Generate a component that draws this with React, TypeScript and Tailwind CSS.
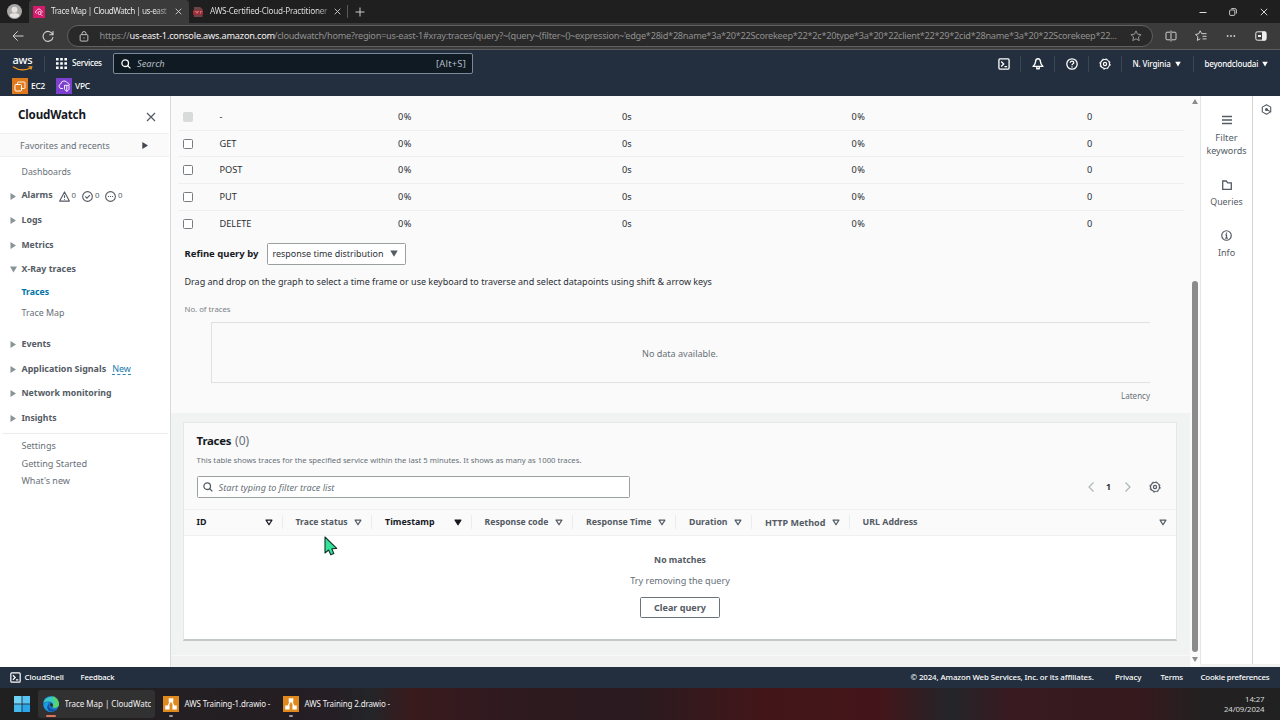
import type { ReactNode } from "react";

type IconProps = { className?: string };

function Gear({ className = "" }: IconProps) {
  return (
    <svg viewBox="0 0 12 12" className={className} fill="none" stroke="currentColor">
      <circle cx="6" cy="6" r="4.5" strokeWidth="1.2" />
      <circle cx="6" cy="6" r="5.2" strokeWidth="0.9" strokeDasharray="2 2.08" />
      <circle cx="6" cy="6" r="1.6" strokeWidth="1.2" />
    </svg>
  );
}

function Shell({ className = "" }: IconProps) {
  return (
    <svg viewBox="0 0 12 12" className={className} fill="none" stroke="currentColor" strokeWidth="1.3">
      <rect x="0.9" y="0.9" width="10.2" height="10.2" rx="1" />
      <path d="M3.2 3.5 5.7 6 3.2 8.5M6.5 8.6h2.6" />
    </svg>
  );
}

function Search({ className = "" }: IconProps) {
  return (
    <svg viewBox="0 0 10 10" className={className} fill="none" stroke="currentColor" strokeWidth="1.3">
      <circle cx="4.2" cy="4.2" r="3.3" />
      <path d="M6.6 6.6 9.4 9.4" />
    </svg>
  );
}

function Close({ className = "" }: IconProps) {
  return (
    <svg viewBox="0 0 10 10" className={className} fill="none" stroke="currentColor" strokeWidth="1.2">
      <path d="M1 1 9 9M9 1 1 9" />
    </svg>
  );
}

function Star({ className = "" }: IconProps) {
  return (
    <svg viewBox="0 0 12 12" className={className} fill="none" stroke="currentColor" strokeWidth="0.9" strokeLinejoin="round">
      <path d="M6 .9 7.5 4.2l3.6.4-2.7 2.4.8 3.6L6 8.8l-3.2 1.8.8-3.6L.9 4.6l3.6-.4z" />
    </svg>
  );
}

function Caret({ className = "" }: IconProps) {
  return (
    <svg viewBox="0 0 8 7" className={className} fill="currentColor">
      <path d="M0.3 0.5h7.4L4 6.8z" />
    </svg>
  );
}

function SortIcon({ filled = false }: { filled?: boolean }) {
  return (
    <svg viewBox="0 0 8 7" className="h-[7px] w-2 shrink-0" fill={filled ? "currentColor" : "none"} stroke="currentColor" strokeWidth="1.2" strokeLinejoin="round">
      <path d="M1.1 1.1h5.8L4 5.8z" />
    </svg>
  );
}

function Drawio() {
  return (
    <svg viewBox="0 0 16 16" className="h-4 w-4 shrink-0">
      <rect width="16" height="16" fill="#e08a1e" />
      <path d="M8 4 4.2 12M8 4l3.8 8" stroke="#fff" strokeWidth="1.3" />
      <path d="M5.7 2.2h4.6v4H5.7zM2.2 9.6h4.4v4H2.2zM9.4 9.6h4.4v4H9.4z" fill="#fff" />
    </svg>
  );
}

function BrowserChrome() {
  return (
    <div className="flex h-[50px] flex-col bg-[#1f1f1f] font-['Noto_Sans','Open_Sans',sans-serif]">
      <div className="flex h-[23px] items-center">
        <div className="flex h-full w-[29px] items-center justify-center">
          <svg viewBox="0 0 16 16" className="h-[15px] w-[15px]">
            <circle cx="8" cy="8" r="8" fill="#a9a7a5" />
            <circle cx="8" cy="6" r="3.2" fill="#e4e2e0" />
            <path d="M2.8 12.4c0-2 2.3-2.6 5.2-2.6s5.2.6 5.2 2.6A7 7 0 0 1 8 15a7 7 0 0 1-5.2-2.6z" fill="#e4e2e0" />
          </svg>
        </div>
        <div className="flex h-full w-[160px] items-center rounded-t bg-[#3b3b3b] pl-1">
          <svg viewBox="0 0 12 12" className="h-3 w-3 shrink-0">
            <rect width="12" height="12" fill="#d31a6b" />
            <path d="M3.5 7.5a1.6 1.6 0 0 1 .2-3 2.3 2.3 0 0 1 4.4.2c1 .2 1.3 1 1 1.8" fill="none" stroke="#fff" strokeWidth=".8" />
            <circle cx="6.5" cy="7" r="1.5" fill="none" stroke="#fff" strokeWidth=".8" />
            <path d="m7.6 8.1 1.7 1.7" stroke="#fff" strokeWidth=".8" />
          </svg>
          <span className="ml-[6px] w-[118px] shrink-0 bg-gradient-to-r from-[#f4f4f4] from-88% to-[#666] bg-clip-text text-[8.2px] tracking-[-0.5px] whitespace-nowrap text-transparent">Trace Map | CloudWatch | us-east</span>
          <Close className="ml-[6px] h-[7px] w-[7px] text-[#ddd]" />
        </div>
        <svg viewBox="0 0 10 10" className="ml-1 h-[10px] w-[10px] shrink-0">
          <path d="M1 0h6l2.5 2v8H1z" fill="#6d4347" />
          <rect y="3.3" width="10" height="4.5" fill="#a02a35" />
          <path d="M1.5 4.7h2v1.5M4.5 6.5v-2h1.5M7.5 6.5v-2h1.5" stroke="#d9a5a8" strokeWidth=".6" fill="none" />
        </svg>
        <span className="ml-[7px] w-[119px] shrink-0 bg-gradient-to-r from-[#e8e8e8] from-90% to-[#666] bg-clip-text text-[8.2px] tracking-[-0.24px] whitespace-nowrap text-transparent">AWS-Certified-Cloud-Practitioner</span>
        <Close className="ml-[5px] h-[7px] w-[7px] text-[#ddd]" />
        <div className="ml-[6px] h-[13px] w-px bg-[#5a5a5a]" />
        <svg viewBox="0 0 10 10" className="ml-[7px] h-[10px] w-[10px]" stroke="#ddd" strokeWidth=".9">
          <path d="M5 .5v9M.5 5h9" />
        </svg>
        <div className="ml-auto flex items-center pr-3 text-[#ddd]">
          <svg viewBox="0 0 8 8" className="h-2 w-2" stroke="currentColor"><path d="M.5 4.5h7" /></svg>
          <svg viewBox="0 0 8 8" className="ml-[22px] h-2 w-2" fill="none" stroke="currentColor" strokeWidth=".9">
            <rect x=".6" y="2" width="5.2" height="5.4" rx="1" />
            <path d="M2.3.6h3.5a1.6 1.6 0 0 1 1.6 1.6V5.5" />
          </svg>
          <Close className="ml-[23px] h-2 w-2" />
        </div>
      </div>
      <div className="flex h-[26px] items-center bg-[#3b3b3b] text-[#d0d0d0]">
        <svg viewBox="0 0 12 12" className="ml-3 h-3 w-3" fill="none" stroke="currentColor"><path d="M11.5 6H1M5.7 1.3 1 6l4.7 4.7" /></svg>
        <svg viewBox="0 0 12 12" className="ml-[18px] h-3 w-3" fill="none" stroke="currentColor" strokeWidth="1.1">
          <path d="M10.9 5.2A5 5 0 1 0 11 7M11 1v3.7H7.3" />
        </svg>
        <div className="ml-[13px] flex h-[22px] w-[1086px] items-center rounded-full border border-[#606060] bg-[#292929] pl-[11px]">
          <svg viewBox="0 0 10 12" className="h-[11px] w-[10px] shrink-0" fill="none" stroke="currentColor">
            <rect x=".8" y="4" width="8.4" height="7" rx="1" />
            <path d="M2.8 4V2.8a2.2 2.2 0 0 1 4.4 0V4M5 7v1.2" />
          </svg>
          <div className="ml-[10.5px] flex shrink-0 text-[9.2px] whitespace-nowrap text-[#8f8f8f]">
            <span className="w-[30px] tracking-[-0.22px]">https://</span>
            <span className="w-[144.5px] tracking-[-0.21px] text-[#f2f2f2]">us-east-1.console.aws.amazon.com</span>
            <span className="w-[842px] tracking-[-0.273px]">/cloudwatch/home?region=us-east-1#xray:traces/query?~(query~(filter~()~expression~'edge*28id*28name*3a*20*22Scorekeep*22*2c*20type*3a*20*22client*22*29*2cid*28name*3a*20*22Scorekeep*22...</span>
          </div>
          <Star className="ml-[14px] h-[12px] w-[12px] shrink-0 text-[#a0a0a0]" />
        </div>
        <svg viewBox="0 0 12 12" className="ml-[12px] h-3 w-3" fill="none" stroke="currentColor">
          <path d="M5 2.2H2A1 1 0 0 0 1 3.2v5.6a1 1 0 0 0 1 1h3M7 2.2h3a1 1 0 0 1 1 1v5.6a1 1 0 0 1-1 1H7M6 .5v11" />
        </svg>
        <svg viewBox="0 0 12 12" className="ml-[18px] h-3 w-3" fill="none" stroke="currentColor" strokeLinejoin="round">
          <path d="M11.5 3.7H6.7L5.2.8 3.7 3.9.6 4.4l2.3 2.4-.6 3.6 3-1.6M7.5 6.3h4M7.5 8.9h4" />
        </svg>
        <svg viewBox="0 0 12 4" className="ml-[19px] h-1 w-[10px]" fill="currentColor"><circle cx="2" cy="2" r="1.1" /><circle cx="6" cy="2" r="1.1" /><circle cx="10" cy="2" r="1.1" /></svg>
        <svg viewBox="0 0 12 10" className="ml-[19px] h-[10px] w-3" fill="none" stroke="#eee">
          <rect x=".8" y=".8" width="10.4" height="8.4" rx="1.5" />
          <path d="M7.5 1h3v8h-3z" fill="#eee" /><path d="M3 5h3" strokeWidth="2" />
        </svg>
      </div>
      <div className="h-px bg-[#5e5e5e]" />
    </div>
  );
}

const Sep = ({ className = "" }: IconProps) => <div className={`h-4 w-px bg-[#3b4755] ${className}`} />;

function AwsNav() {
  return (
    <div className="flex h-[46px] flex-col bg-[#232f3e] text-[8px] text-white">
      <div className="flex h-[27px] items-center">
        <div className="ml-3 flex w-[21px] flex-col items-center">
          <span className="h-[9px] text-[11px] leading-[6px] font-medium tracking-[-0.1px]">aws</span>
          <svg viewBox="0 0 21 5" className="h-[5px] w-[21px]" fill="none" stroke="#f79a1c" strokeWidth="1.2">
            <path d="M1 .8c5.500 3.7 12 3.9 17.5 1.2M16.5.8h3.3l-1 2.7" />
          </svg>
        </div>
        <Sep className="ml-[11px]" />
        <svg viewBox="0 0 11 11" className="ml-[11px] h-[11px] w-[11px]" fill="#fff">
          <path d="M0 0h2.6v2.6H0zM4.2 0h2.6v2.6H4.2zM8.4 0H11v2.6H8.4zM0 4.2h2.6v2.6H0zM4.2 4.2h2.6v2.6H4.2zM8.4 4.2H11v2.6H8.4zM0 8.4h2.6V11H0zM4.2 8.4h2.6V11H4.2zM8.4 8.4H11V11H8.4z" />
        </svg>
        <span className="ml-[5px] w-[41px] text-[8.2px] font-medium tracking-[-0.26px]">Services</span>
        <div className="flex h-[21px] w-[360px] items-center rounded-[2px] border border-[#7d8998] bg-[#0f1a22] px-[7px]">
          <Search className="h-[10px] w-[10px] text-white" />
          <span className="ml-[6px] text-[9.3px] text-[#b4bcc4] italic">Search</span>
          <span className="-mr-[1px] ml-auto text-[9.3px] tracking-[0.25px] text-[#b4bcc4]">[Alt+S]</span>
        </div>
        <div className="ml-auto flex items-center">
          <Shell className="h-[12px] w-[12px]" />
          <Sep className="ml-[10px]" />
          <svg viewBox="0 0 12 12" className="ml-[11px] h-3 w-3" fill="none" stroke="#fff" strokeWidth="1.4" strokeLinejoin="round">
            <path d="M6 .8C4.300.8 3.6 2.2 3.6 3.6c0 2-1 3.2-2.5 4.800h9.8C9.4 6.8 8.4 5.6 8.4 3.6 8.4 2.2 7.7.8 6 .8zM4.8 9v1.800h2.4V9" />
          </svg>
          <Sep className="ml-[10px]" />
          <svg viewBox="0 0 12 12" className="ml-[11px] h-3 w-3" fill="none" stroke="#fff" strokeWidth="1.3">
            <circle cx="6" cy="6" r="5.2" />
            <path d="M4.2 4.8c0-1 .8-1.6 1.8-1.6s1.8.6 1.8 1.5C7.8 5.8 6 5.8 6 7.2M6 8.2v1.2" />
          </svg>
          <Sep className="ml-[10px]" />
          <Gear className="ml-[10.5px] h-3 w-3" />
          <Sep className="ml-[9.5px]" />
          <span className="ml-[11px] w-[38px] font-medium tracking-[-0.14px] whitespace-nowrap">N. Virginia</span>
          <Caret className="ml-[4px] h-[6px] w-[6px]" />
          <Sep className="ml-[12px]" />
          <span className="ml-[11px] w-[54px] font-medium tracking-[-0.19px] whitespace-nowrap">beyondcloudai</span>
          <Caret className="mr-[12px] ml-[3.5px] h-[6px] w-[6px]" />
        </div>
      </div>
      <div className="flex h-[18px] items-center pl-3">
        <svg viewBox="0 0 16 16" className="h-4 w-4" fill="none" stroke="#fff">
          <rect width="16" height="16" fill="#e0791c" stroke="none" />
          <rect x="3" y="6.5" width="6.5" height="6.5" rx="1" /><path d="M5.500 6.500V5a1 1 0 0 1 1-1H12a1 1 0 0 1 1 1v4.500a1 1 0 0 1-1 1H9.500" strokeWidth=".9" />
        </svg>
        <span className="ml-[3px] w-[25px] text-[8.3px] font-medium tracking-[-0.2px]">EC2</span>
        <svg viewBox="0 0 16 16" className="h-4 w-4" fill="none" stroke="#fff" strokeWidth=".9">
          <rect width="16" height="16" fill="#7c3fd0" stroke="none" />
          <path d="M7 10.5H5a2.3 2.3 0 0 1-.3-4.5A3.6 3.6 0 0 1 11.500 5c1.300.2 2 1 2 2" /><path d="M8.5 7.3h4.5v3.5c0 1.500-2.2 2.5-2.2 2.5S8.500 12.3 8.5 10.8zM10.8 7.3v6" />
        </svg>
        <span className="ml-[3px] text-[8.3px] font-medium tracking-[-0.2px]">VPC</span>
      </div>
    </div>
  );
}

function NavGroup({ label, open = false, children }: { label: ReactNode; open?: boolean; children?: ReactNode }) {
  return (
    <div className="flex h-[24.6px] items-center text-[8.85px] font-bold whitespace-nowrap text-[#545b64]">
      <svg viewBox="0 0 7 7" className="ml-[10px] h-[7px] w-[7px] text-[#879596]" fill="currentColor">
        {open ? <path d="M0 .5h7L3.5 6.500z" /> : <path d="M.5 0v7l5.5-3.5z" />}
      </svg>
      <span className="ml-[4.5px]">{label}</span>
      {children}
    </div>
  );
}

function Sidebar() {
  return (
    <aside className="flex w-[171px] shrink-0 flex-col border-r border-[#d5dbdb] bg-white text-[9px] text-[#687078]">
      <div className="flex h-[37px] items-center pl-[18px]">
        <span className="w-[128px] text-[11.6px] font-bold tracking-[-0.17px] text-[#16191f]">CloudWatch</span>
        <Close className="mt-[4px] h-[10px] w-[10px] text-[#545b64]" />
      </div>
      <div className="flex h-[24px] w-[169px] items-center border-y border-[#eff1f1] bg-[#fafafa] pt-px pl-5">
        <span className="w-[122px] text-[8.95px]">Favorites and recents</span>
        <svg viewBox="0 0 6 7" className="h-[7px] w-[6px]" fill="#414750"><path d="M.3 0v7L6 3.5z" /></svg>
      </div>
      <div className="mt-[4.800px] flex h-[22px] items-center pl-[21.5px] text-[8.75px]">Dashboards</div>
      <NavGroup label="Alarms">
        <div className="ml-[6px] flex items-center text-[7.8px] font-normal">
          <svg viewBox="0 0 12 12" className="h-[11px] w-[11px]" fill="none" stroke="currentColor" strokeWidth="1.200" strokeLinejoin="round"><path d="M6 1 11.3 11H.7zM6 4.5v3.2M6 8.6v1" /></svg>
          <span className="ml-[2px] w-[10px]">0</span>
          <svg viewBox="0 0 12 12" className="h-[11px] w-[11px]" fill="none" stroke="currentColor" strokeWidth="1.200"><circle cx="6" cy="6" r="5.3" /><path d="m3.6 6 1.8 1.8 3.2-3.4" /></svg>
          <span className="ml-[2.5px] w-[10px]">0</span>
          <svg viewBox="0 0 12 12" className="h-[11px] w-[11px]" fill="none" stroke="currentColor" strokeWidth="1.200"><circle cx="6" cy="6" r="5.3" /><path d="M3.2 6h1.2M5.4 6h1.2M7.6 6h1.2" /></svg>
          <span className="ml-[2px]">0</span>
        </div>
      </NavGroup>
      <NavGroup label="Logs" />
      <NavGroup label={<span className="text-[8.6px]">Metrics</span>} />
      <NavGroup label="X-Ray traces" open />
      <div className="flex h-[20px] items-center pl-[21.5px] text-[8.7px] font-bold text-[#0073a8]">Traces</div>
      <div className="mb-[9px] flex h-[21px] items-center pl-[21.5px] text-[8.9px]">Trace Map</div>
      <NavGroup label="Events" />
      <NavGroup label={<span className="text-[8.95px]">Application Signals</span>}>
        <span className="ml-[6px] border-b border-dashed border-[#2f86b5] text-[9px] leading-[11px] font-normal text-[#1a7cb0]">New</span>
      </NavGroup>
      <NavGroup label={<span className="text-[8.75px]">Network monitoring</span>} />
      <NavGroup label={<span className="text-[8.65px]">Insights</span>} />
      <div className="mt-[2px] mb-[4px] h-px w-[166px] self-center bg-[#eaeded]" />
      <div className="flex h-[17.3px] items-center pl-[21.5px]">Settings</div>
      <div className="flex h-[17.3px] items-center pl-[21.5px] text-[9.15px]">Getting Started</div>
      <div className="flex h-[17.3px] items-center pl-[21.5px]">What's new</div>
    </aside>
  );
}

const methods = ["-", "GET", "POST", "PUT", "DELETE"];

function MethodTable() {
  return (
    <div className="mr-[6px] ml-[7px] pt-[8px]">
      {methods.map((m, i) => (
        <div key={m} className={`flex h-[26.700px] items-center text-[9.2px] text-[#2b2f36] ${i < 4 ? "border-b border-[#efefef]" : ""}`}>
          <div className={`ml-[5px] h-[10px] w-[10px] shrink-0 rounded-[1.5px] border ${i === 0 ? "border-[#d9dbdb] bg-[#d9dbdb]" : "border-[#757c82] bg-white"}`} />
          <span className="ml-[26.5px] w-[178.5px]">{m}</span>
          <span className="w-[224px] tracking-[0.5px]">0%</span>
          <span className="w-[229.5px]">0s</span>
          <span className="w-[235.5px] tracking-[0.5px]">0%</span>
          <span>0</span>
        </div>
      ))}
    </div>
  );
}

type Column = { label: string; width: string; tone?: string; filled?: boolean; text?: string };
const columns: Column[] = [
  { label: "ID", width: "w-[99px]", tone: "text-[#16191f]" },
  { label: "Trace status", width: "w-[89.500px]", text: "text-[8.6px]" },
  { label: "Timestamp", width: "w-[99.500px]", tone: "text-[#16191f]", filled: true },
  { label: "Response code", width: "w-[101.5px]", text: "text-[8.65px]" },
  { label: "Response Time", width: "w-[103px]", text: "text-[8.75px]" },
  { label: "Duration", width: "w-[76px]", text: "text-[8.7px]" },
  { label: "HTTP Method", width: "w-[97.5px]", text: "text-[9px]" },
  { label: "URL Address", width: "w-[313.5px]" },
];

function TracesCard() {
  return (
    <section className="mr-[13px] ml-3 flex h-[219px] flex-col border-x border-t border-b-2 border-[#e3e7e7] border-b-[#c3c9c9] bg-white">
      <div className="flex h-[113px] flex-col bg-[#fafafa] pr-[13px] pl-[12.600px]">
        <div className="flex h-[36px] items-center text-[#16191f]">
          <span className="w-[38.500px] text-[11.4px] font-bold tracking-[-0.22px]">Traces</span>
          <span className="text-[12px] text-[#687078]">(0)</span>
        </div>
        <div className="flex h-[17.500px] items-start text-[7.72px] leading-[3px] text-[#687078]">
          <span className="whitespace-nowrap">This table shows traces for the specified service within the last 5 minutes. It shows as many as 1000 traces.</span>
        </div>
        <div className="flex h-[22px] items-center">
          <div className="flex h-[22px] w-[433px] items-center rounded-[1.5px] border border-[#9a9fa2] bg-white pl-[5px]">
            <Search className="h-[10px] w-[10px] text-[#545b64]" />
            <span className="ml-[6px] text-[9.1px] tracking-[0.01px] text-[#687078] italic">Start typing to filter trace list</span>
          </div>
          <svg viewBox="0 0 6 10" className="ml-auto h-[10px] w-[6px]" fill="none" stroke="#aab7b8" strokeWidth="1.2"><path d="M5.5.5 1 5l4.500 4.5" /></svg>
          <span className="ml-[12.500px] w-[6px] text-[8.7px] font-bold text-[#2b2f36]">1</span>
          <svg viewBox="0 0 6 10" className="ml-[12.500px] h-[10px] w-[6px]" fill="none" stroke="#aab7b8" strokeWidth="1.2"><path d="M.5.5 5 5 .5 9.5" /></svg>
          <Gear className="mr-[2.500px] ml-[18px] h-3 w-3 text-[#545b64]" />
        </div>
        <div className="-mr-[13px] -ml-[12.600px] mt-[10.500px] flex h-[27px] items-center border-y border-[#eff1f1] pl-[12.600px] text-[8.85px] font-bold text-[#545b64]">
          {columns.map((c, i) => (
            <div key={c.label} className={`flex h-[14px] shrink-0 items-center ${c.width} ${c.tone ?? ""}`}>
              <span className={`whitespace-nowrap ${c.text ?? ""}`}>{c.label}</span>
              <span className={`ml-auto flex h-[14px] items-center pr-[9px] ${i < 7 ? "mr-[13px] border-r border-[#eaeded]" : ""}`}>
                <SortIcon filled={c.filled} />
              </span>
            </div>
          ))}
        </div>
      </div>
      <div className="flex flex-col items-center pt-[14.5px] text-[#687078]">
        <div className="flex h-[20px] items-center text-[8.7px] font-bold text-[#545b64]">No matches</div>
        <div className="flex h-[21px] items-center text-[9.1px]">Try removing the query</div>
        <div className="mt-[5.5px] flex h-[21px] w-[80px] items-center justify-center rounded-[1.5px] border border-[#6b7278] text-[9.05px] font-bold text-[#545b64]">Clear query</div>
      </div>
    </section>
  );
}

function Content() {
  return (
    <main className="flex w-[1019px] shrink-0 flex-col bg-[#fafafa] text-[#2b2f36]">
      <MethodTable />
      <div className="mt-[5.500px] ml-[13.5px] flex h-[22px] items-center">
        <span className="w-[82px] text-[9.5px] font-bold text-[#16191f]">Refine query by</span>
        <div className="flex h-[22px] w-[139px] items-center rounded-[1.5px] border border-[#9a9fa2] bg-white pl-[5px] text-[8.95px]">
          <span className="w-[117px]">response time distribution</span>
          <Caret className="h-[7px] w-2 text-[#545b64]" />
        </div>
      </div>
      <div className="mt-[6px] ml-[13.5px] flex h-[21px] items-center text-[9px]">Drag and drop on the graph to select a time frame or use keyboard to traverse and select datapoints using shift &amp; arrow keys</div>
      <div className="mt-[10px] ml-[13.5px] flex h-[16px] items-center text-[7.75px] text-[#7a8187]">No. of traces</div>
      <div className="mt-[4px] ml-10 flex h-[61px] w-[939px] items-center justify-center border-y border-l border-[#dfe2e2] text-[9.05px] text-[#687078]">
        <span className="pt-[3px] pr-[2px]">No data available.</span>
      </div>
      <div className="mt-[5px] mr-[40px] flex h-[16px] items-center justify-end text-[8px] text-[#687078]">Latency</div>
      <div className="mt-[9px] flex-1 bg-[#f1f3f3] pt-[9px]">
        <TracesCard />
        <div className="mt-[14px] h-px bg-[#f8f8f8]" />
        <div className="h-[11px] bg-[#f2f1f1]" />
      </div>
    </main>
  );
}

function Scrollbar() {
  return (
    <div className="flex w-[10px] shrink-0 flex-col items-center bg-[#fafafa] py-[3px] text-[#8b8b8b]">
      <svg viewBox="0 0 6 5" className="h-[5px] w-[6px]" fill="currentColor"><path d="M0 5h6L3 0z" /></svg>
      <div className="mt-[177px] h-[371px] w-[6px] rounded-full bg-[#8b8b8b]" />
      <svg viewBox="0 0 6 5" className="mt-[5px] h-[5px] w-[6px]" fill="currentColor"><path d="M0 0h6L3 5z" /></svg>
    </div>
  );
}

function ToolRail() {
  return (
    <div className="flex flex-1 flex-col bg-[#f1f1f1] pb-[3px]">
      <div className="flex flex-1 bg-white text-[9px] text-[#545b64]">
        <div className="flex w-[53px] flex-col items-center border-x border-[#e3e6e6] border-r-[#d5d5d5] pt-[19px]">
          <svg viewBox="0 0 10 10" className="h-[10px] w-[10px]" stroke="currentColor" strokeWidth="1.300"><path d="M0 1.500h10M0 5h10M0 8.500h10" /></svg>
          <span className="mt-[6px] text-center leading-[13.3px]"><span className="text-[9.4px]">Filter</span><br />keywords</span>
          <svg viewBox="0 0 10 10" className="mt-[22px] h-[10px] w-[10px]" fill="none" stroke="currentColor" strokeWidth="1.300"><path d="M.7 1h3.6l1.4 1.8h3.6V9.3H.7z" /></svg>
          <span className="mt-[6px] text-[8.85px] leading-[13px]">Queries</span>
          <svg viewBox="0 0 12 12" className="mt-[21.500px] h-[11px] w-[11px]" fill="none" stroke="currentColor" strokeWidth="1.300"><circle cx="6" cy="6" r="5.2" /><path d="M6 2.7V4M4.7 5.400H6v3.4M4.500 8.800h3" /></svg>
          <span className="mt-[5px] leading-[13px]">Info</span>
        </div>
        <div className="flex flex-1 justify-center pt-2">
          <svg viewBox="0 0 12 12" className="h-[11px] w-[11px]" fill="none" stroke="currentColor" strokeWidth="1.200" strokeLinejoin="round"><path d="M6 .8 10.6 3.4v5.200L6 11.200 1.400 8.600V3.400zM10.600 8.600 6.200 6" /><circle cx="6" cy="6" r="1.100" fill="currentColor" /></svg>
        </div>
      </div>
    </div>
  );
}

function Footer() {
  return (
    <footer className="flex h-[21px] items-center bg-[#232f3e] pl-[10px] text-[7.9px] font-medium whitespace-nowrap text-white">
      <Shell className="h-[11px] w-[11px]" />
      <span className="ml-[3.5px] w-[56px] tracking-[-0.05px]">CloudShell</span>
      <span className="text-[7.7px] tracking-[-0.13px]">Feedback</span>
      <div className="ml-auto flex">
        <span className="w-[204.5px] tracking-[-0.11px]">© 2024, Amazon Web Services, Inc. or its affiliates.</span>
        <span className="w-[45.5px] tracking-[-0.11px]">Privacy</span>
        <span className="w-[40px] tracking-[-0.11px]">Terms</span>
        <span className="w-[79.5px] tracking-[-0.21px]">Cookie preferences</span>
      </div>
    </footer>
  );
}

function Taskbar() {
  return (
    <div className="flex h-8 items-center bg-[linear-gradient(90deg,#202020_0px,#231f22_160px,#251e24_330px,#232528_370px,#391a1d_410px,#2e1a1f_520px,#2a1b20_640px,#421619_760px,#43151a_880px,#232529_950px,#381a20_1010px,#35191d_1140px,#232021_1200px,#212121_1280px)] text-[8px] whitespace-nowrap text-[#f0f0f0]">
      <svg viewBox="0 0 16 16" className="ml-[14px] h-4 w-4">
        <path d="M0 0h7.6v7.6H0z" fill="#6fd3f8" /><path d="M8.4 0H16v7.600H8.400z" fill="#57c4f4" /><path d="M0 8.400h7.600V16H0z" fill="#45b8f0" /><path d="M8.400 8.400H16V16H8.400z" fill="#2aa5ea" />
      </svg>
      <div className="ml-2 flex h-7 w-[117px] items-center rounded-[3px] bg-[#323132] pl-[5px]">
        <div className="flex h-full w-4 shrink-0 flex-col items-center justify-end">
          <svg viewBox="0 0 16 16" className="h-4 w-4">
            <circle cx="8" cy="8" r="8" fill="#1976c8" />
            <path d="M.2 7A8 8 0 0 1 16 8c0 2.500-2 3.800-4.200 3.800-1.800 0-2.600-.8-2.100-1.700C11 7.500 8.500 5.500 5.500 5.500 3 5.500 1 6 .2 7z" fill="#3bc9c0" />
            <path d="M9 .1A8 8 0 0 1 16 8c0 2.500-2 3.800-4.200 3.800-1.500 0-2.300-.6-2.200-1.300C13 9 12 4 9 .1z" fill="#62d84e" opacity=".75" />
            <path d="M5 8.500C4.500 12 7 15 10.500 15.600 6 17 1 13.500.8 9.500.7 7 3 5.700 5.700 5.700c-.5.800-.6 1.800-.7 2.800z" fill="#1c9de0" />
            <path d="M6 8c-1.300 4 2.500 6.700 7.300 5.500-2 2-5 2.700-7 1.500C3.500 13 3.600 9.500 6 8z" fill="#124f9c" />
            <path d="M7.300 7.500c1.200-.8 2.800.2 2.600 1.700-.1.800-.6 1-.3 1.700-1.700.3-3.200-1.800-2.300-3.400z" fill="#323132" />
          </svg>
          <div className="mt-[3px] mb-[1px] h-[2px] w-[10px] rounded bg-[#d8755c]" />
        </div>
        <span className="ml-[5.5px] w-[86px] overflow-hidden tracking-[-0.04px]">Trace Map | CloudWatch</span>
      </div>
      <div className="ml-[8px] flex h-7 w-4 flex-col items-center justify-end">
        <Drawio />
        <div className="mt-[3px] mb-[1px] h-[2px] w-1 rounded bg-[#9a9a9a]" />
      </div>
      <span className="ml-[5.5px] w-[98.5px] tracking-[-0.14px]">AWS Training-1.drawio -</span>
      <div className="flex h-7 w-4 flex-col items-center justify-end">
        <Drawio />
        <div className="mt-[3px] mb-[1px] h-[2px] w-1 rounded bg-[#9a9a9a]" />
      </div>
      <span className="ml-[5.5px] tracking-[-0.13px]">AWS Training 2.drawio -</span>
      <div className="mr-[15.5px] ml-auto flex flex-col text-right text-[7.8px] leading-[10.5px] tracking-[-0.09px] text-[#d8d8d8]">
        <span>14:27</span>
        <span>24/09/2024</span>
      </div>
    </div>
  );
}

export default function App() {
  return (
    <div className="relative flex h-[720px] w-[1280px] flex-col overflow-hidden bg-white font-['Noto_Sans',sans-serif]">
      <BrowserChrome />
      <AwsNav />
      <div className="flex h-[571px] shrink-0">
        <Sidebar />
        <Content />
        <Scrollbar />
        <ToolRail />
      </div>
      <Footer />
      <Taskbar />
      <svg viewBox="0 0 14 20" className="absolute top-[536px] left-[324px] h-5 w-[14px]">
        <path d="M1 1v16l3.600-3 2.200 4.800 3-1.300-2-4.700 4.900-.4z" fill="#35e29a" stroke="#12352a" strokeWidth="1.100" strokeLinejoin="round" />
      </svg>
    </div>
  );
}
